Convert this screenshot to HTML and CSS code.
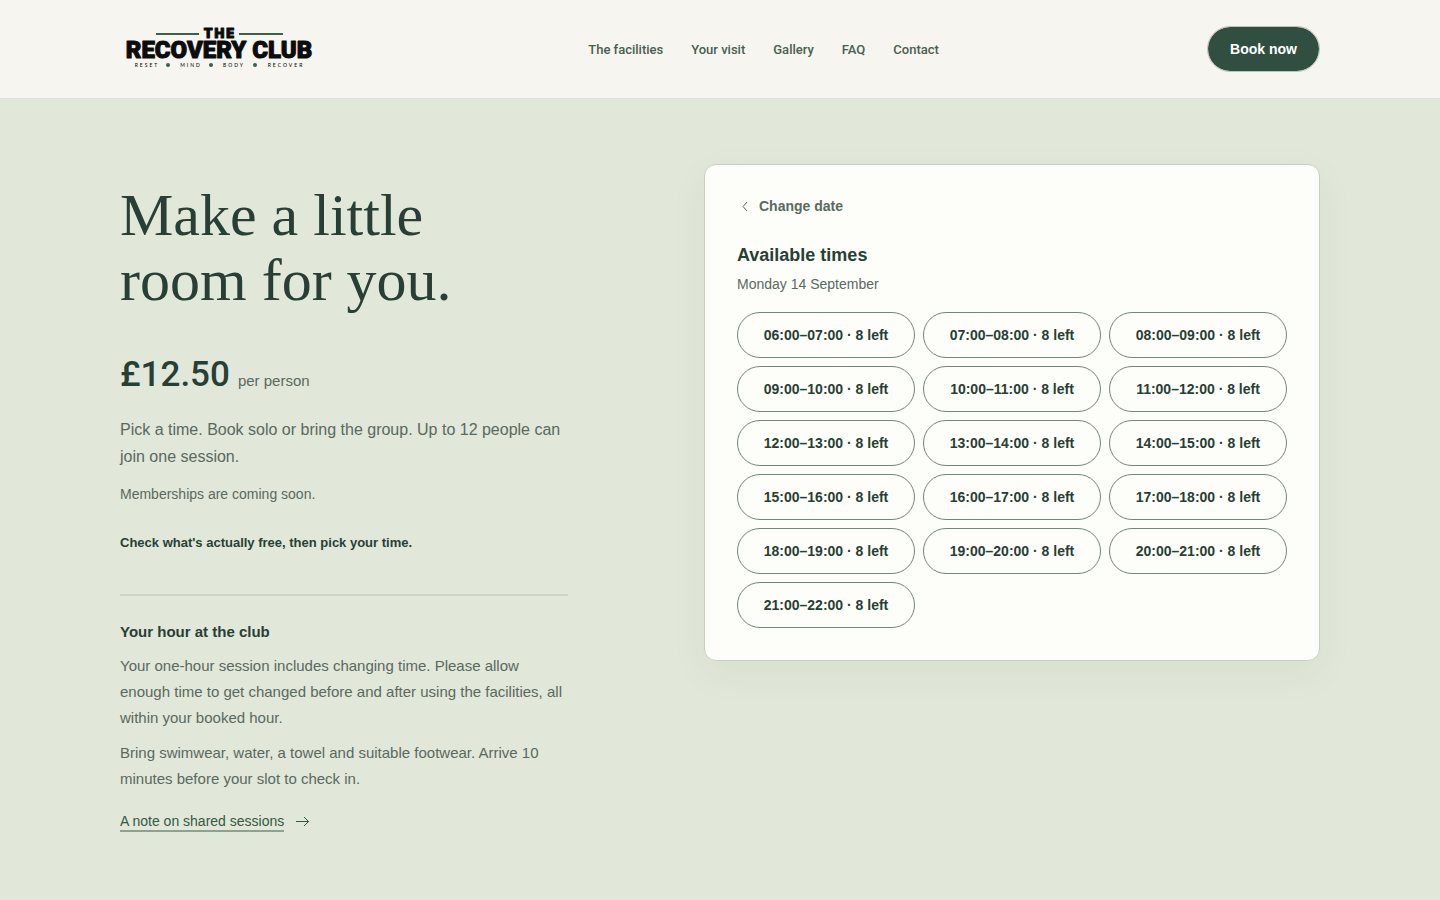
FILE: index.html
```html
<!DOCTYPE html>
<html lang="en-GB">
<head>
  <meta charset="UTF-8" />
  <meta name="viewport" content="width=device-width, initial-scale=1.0" />
  <title>Book | The Recovery Club</title>
  <link rel="stylesheet" href="styles.css">
</head>
<body>
  <header class="site-header">
    <div class="wrap header-inner">
      <a class="logo" href="#" aria-label="The Recovery Club home">
        <svg width="200" height="58" viewBox="0 -6 200 58">
          <g stroke="#3c5f4b" stroke-width="2">
            <path d="M36 8h43M119 8h44" />
          </g>
          <text class="logo-the" x="100" y="12">THE</text>
          <text class="logo-name" x="99" y="32">RECOVERY CLUB</text>
          <g class="logo-tag">
            <text x="27" y="41">RESET</text>
            <text x="71" y="41">MIND</text>
            <text x="114" y="41">BODY</text>
            <text x="166" y="41">RECOVER</text>
          </g>
          <g fill="#3c5f4b">
            <circle cx="48" cy="39" r="2" />
            <circle cx="91" cy="39" r="2" />
            <circle cx="135" cy="39" r="2" />
          </g>
        </svg>
      </a>
      <nav class="site-nav">
        <a href="#facilities">The facilities</a>
        <a href="#visit">Your visit</a>
        <a href="#gallery">Gallery</a>
        <a href="#faq">FAQ</a>
        <a href="#contact">Contact</a>
      </nav>
      <a class="book-btn" href="#book">Book now</a>
    </div>
  </header>

  <main class="wrap booking" id="book">
    <section class="intro">
      <h1>Make a little<br>room for you.</h1>
      <p class="price"><strong>£12.50</strong> <span>per person</span></p>
      <p class="lead">Pick a time. Book solo or bring the group. Up to 12 people can join one session.</p>
      <p class="small">Memberships are coming soon.</p>
      <p class="check">Check what's actually free, then pick your time.</p>

      <div class="hour">
        <h2>Your hour at the club</h2>
        <p>Your one-hour session includes changing time. Please allow enough time to get changed before and after using the facilities, all within your booked hour.</p>
        <p>Bring swimwear, water, a towel and suitable footwear. Arrive 10 minutes before your slot to check in.</p>
        <a class="note-link" href="#shared">
          <span>A note on shared sessions</span>
          <svg width="14" height="12" viewBox="0 0 14 12" fill="none" stroke="currentColor"><path d="M0 5.500h13M8 1l4.500 4.500L8 10" /></svg>
        </a>
      </div>
    </section>

    <section class="card">
      <button class="back-btn" type="button">
        <svg width="16" height="16" viewBox="0 0 16 16" fill="none" stroke="currentColor"><path d="M10 4L6 8.500l4 4.500" /></svg>
        Change date
      </button>
      <h2>Available times</h2>
      <p class="date">Monday 14 September</p>
      <div class="slots">
        <button type="button">06:00–07:00 · 8 left</button>
        <button type="button">07:00–08:00 · 8 left</button>
        <button type="button">08:00–09:00 · 8 left</button>
        <button type="button">09:00–10:00 · 8 left</button>
        <button type="button">10:00–11:00 · 8 left</button>
        <button type="button">11:00–12:00 · 8 left</button>
        <button type="button">12:00–13:00 · 8 left</button>
        <button type="button">13:00–14:00 · 8 left</button>
        <button type="button">14:00–15:00 · 8 left</button>
        <button type="button">15:00–16:00 · 8 left</button>
        <button type="button">16:00–17:00 · 8 left</button>
        <button type="button">17:00–18:00 · 8 left</button>
        <button type="button">18:00–19:00 · 8 left</button>
        <button type="button">19:00–20:00 · 8 left</button>
        <button type="button">20:00–21:00 · 8 left</button>
        <button type="button">21:00–22:00 · 8 left</button>
      </div>
    </section>
  </main>
</body>
</html>
```
FILE: styles.css
```css
* {
  box-sizing: border-box;
}

body {
  margin: 0;
  background: #e1e7d9;
  color: #273f35;
  font-family: "Liberation Sans", Arial, sans-serif;
  font-size: 16px;
}

h1, h2, p {
  margin: 0;
}

a {
  color: inherit;
  text-decoration: none;
}

button {
  font-family: inherit;
  color: inherit;
  cursor: pointer;
}

.wrap {
  max-width: 1248px;
  margin: 0 auto;
  padding: 0 24px;
}

/* header */
.site-header {
  background: #f7f5f0;
  border-bottom: 1px solid #dfe1d8;
}

.header-inner {
  display: flex;
  justify-content: space-between;
  align-items: center;
  padding-top: 20px;
  padding-bottom: 20px;
}

.logo svg {
  display: block;
}

.logo text {
  text-anchor: middle;
  fill: #0a0d0b;
}

.logo .logo-the {
  font: 900 13px Inter, sans-serif;
  letter-spacing: 2px;
  stroke: #0a0d0b;
  stroke-width: 1;
  stroke-linejoin: round;
}

.logo .logo-name {
  font: 900 24px Roboto, sans-serif;
  stroke: #0a0d0b;
  stroke-width: 1;
  stroke-linejoin: round;
}

.logo .logo-tag text {
  font: 500 5px Lato, sans-serif;
  letter-spacing: 2px;
}

.site-nav {
  display: flex;
  gap: 28px;
  font-family: Roboto, sans-serif;
  font-size: 13px;
  font-weight: 500;
  color: #47604f;
}

.book-btn {
  padding: 0 22px;
  border: 1px solid #b9c4b8;
  border-radius: 23px;
  background: #304f40;
  background-clip: padding-box;
  color: #fff;
  font-size: 14px;
  font-weight: 700;
  line-height: 44px;
}

/* booking */
.booking {
  display: grid;
  grid-template-columns: minmax(0, 448px) minmax(0, 616px);
  justify-content: space-between;
  align-items: start;
  gap: 48px;
  padding-top: 65px;
  padding-bottom: 65px;
}

.intro {
  padding-top: 19px;
}

.intro h1 {
  font-family: "Liberation Serif", "Times New Roman", serif;
  font-size: 60px;
  font-weight: 400;
  line-height: 65px;
}

.price {
  display: flex;
  align-items: baseline;
  gap: 8px;
  margin-top: 38px;
  font-size: 15px;
  line-height: 48px;
  color: #5a695f;
}

.price strong {
  font-family: Roboto, sans-serif;
  font-size: 35px;
  font-weight: 500;
  color: #273f35;
}

.lead {
  margin-top: 11px;
  line-height: 27px;
  color: #5a695f;
}

.small {
  margin-top: 14px;
  font-size: 14px;
  line-height: 20px;
  color: #5a695f;
}

.check {
  margin-top: 28px;
  font-size: 13px;
  font-weight: 700;
  line-height: 22px;
}

.hour {
  margin-top: 40px;
  padding-top: 24px;
  border-top: 2px solid #ccd6c6;
}

.hour h2 {
  font-size: 15px;
  line-height: 24px;
}

.hour p {
  margin-top: 9px;
  font-size: 15px;
  line-height: 26px;
  color: #5a695f;
}

.note-link {
  display: inline-flex;
  align-items: center;
  gap: 12px;
  margin-top: 20px;
  font-size: 14px;
  line-height: 18px;
  color: #315a43;
}

.note-link span {
  border-bottom: 2px solid #8ba38f;
}

/* time picker */
.card {
  padding: 32px;
  background: #fdfdf9;
  border: 1px solid #c7d1be;
  border-radius: 12px;
  box-shadow: 0 12px 40px rgba(60, 100, 60, 0.05);
}

.back-btn {
  display: flex;
  align-items: center;
  gap: 6px;
  padding: 0;
  border: 0;
  background: none;
  font-size: 14px;
  font-weight: 700;
  line-height: 18px;
  color: #5a695f;
}

.card h2 {
  margin-top: 27px;
  font-size: 18px;
  line-height: 26px;
}

.date {
  margin-top: 6px;
  font-size: 14px;
  line-height: 20px;
  color: #5a695f;
}

.slots {
  display: grid;
  grid-template-columns: repeat(3, 1fr);
  gap: 8px;
  margin-top: 18px;
}

.slots button {
  height: 46px;
  padding: 0;
  border: 1px solid #74857b;
  border-radius: 23px;
  background: transparent;
  font-size: 14px;
  font-weight: 700;
}
```
